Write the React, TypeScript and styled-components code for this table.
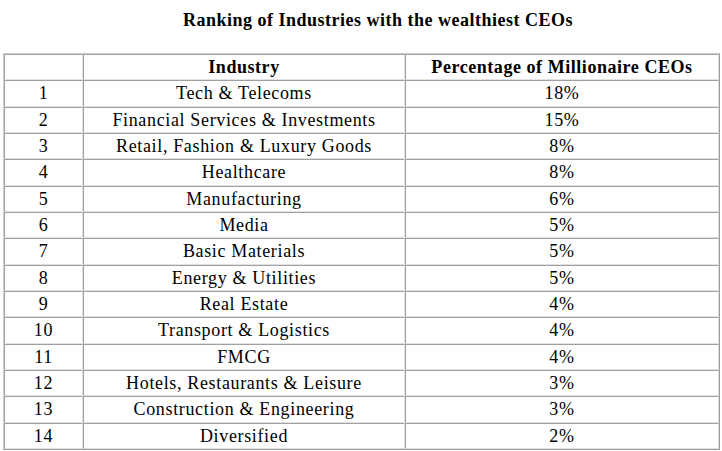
import styled, { createGlobalStyle } from "styled-components";

const serif = `"Liberation Serif", "Times New Roman", "DejaVu Serif", serif`;

const GlobalStyle = createGlobalStyle`
  html, body {
    margin: 0;
    padding: 0;
    background: #ffffff;
  }
  body {
    font-family: ${serif};
    color: #000000;
  }
`;

const Page = styled.div`
  width: 722px;
  height: 451px;
  overflow: hidden;
  font-family: ${serif};
`;

const Title = styled.h1`
  margin: 0;
  padding: 10px 0 0 34px;
  height: 53px;
  box-sizing: border-box;
  text-align: center;
  font-family: ${serif};
  font-size: 18px;
  line-height: 20px;
  font-weight: bold;
  letter-spacing: 0.5px;
`;

const Table = styled.table`
  margin-left: 3px;
  width: 717px;
  border-collapse: separate;
  border-spacing: 0;
  border-style: solid;
  border-width: 1px;
  border-color: #cfcfcf #9a9a9a #9a9a9a #cfcfcf;
  table-layout: fixed;
  font-family: ${serif};
`;

const Cell = styled.td<{ $head?: boolean }>`
  box-sizing: border-box;
  height: 26.33px;
  padding: 0;
  border-style: solid;
  border-width: 1px;
  border-color: #a0a0a0 #e2e2e2 #e2e2e2 #a0a0a0;
  text-align: center;
  vertical-align: middle;
  white-space: nowrap;
  font-family: ${serif};
  font-size: 18px;
  line-height: 20px;
  letter-spacing: ${(p) => (p.$head ? "0.55px" : "0.65px")};
  font-weight: ${(p) => (p.$head ? "bold" : "normal")};
`;

const rows: [string, string][] = [
  ["Tech & Telecoms", "18%"],
  ["Financial Services & Investments", "15%"],
  ["Retail, Fashion & Luxury Goods", "8%"],
  ["Healthcare", "8%"],
  ["Manufacturing", "6%"],
  ["Media", "5%"],
  ["Basic Materials", "5%"],
  ["Energy & Utilities", "5%"],
  ["Real Estate", "4%"],
  ["Transport & Logistics", "4%"],
  ["FMCG", "4%"],
  ["Hotels, Restaurants & Leisure", "3%"],
  ["Construction & Engineering", "3%"],
  ["Diversified", "2%"],
];

export default function App() {
  return (
    <Page>
      <GlobalStyle />
      <Title>Ranking of Industries with the wealthiest CEOs</Title>
      <Table>
        <colgroup>
          <col style={{ width: 79 }} />
          <col style={{ width: 322 }} />
          <col />
        </colgroup>
        <tbody>
          <tr>
            <Cell $head></Cell>
            <Cell $head>Industry</Cell>
            <Cell $head>Percentage of Millionaire CEOs</Cell>
          </tr>
          {rows.map(([name, pct], i) => (
            <tr key={name}>
              <Cell>{i + 1}</Cell>
              <Cell>{name}</Cell>
              <Cell>{pct}</Cell>
            </tr>
          ))}
        </tbody>
      </Table>
    </Page>
  );
}
